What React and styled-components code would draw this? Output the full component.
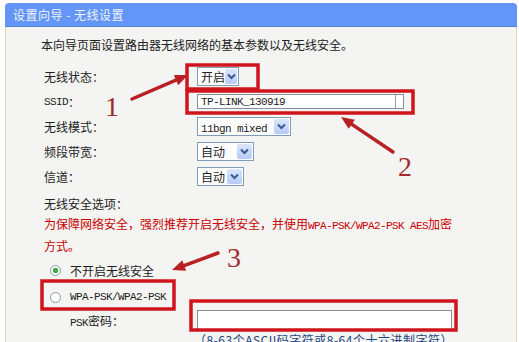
import React from "react";
import styled, { createGlobalStyle } from "styled-components";

const GlobalStyle = createGlobalStyle`
  html, body {
    margin: 0;
    padding: 0;
    background: #ffffff;
    width: 519px;
    height: 342px;
    overflow: hidden;
  }
  body {
    font-family: "Noto Sans CJK SC", "Noto Sans", sans-serif;
    font-size: 12px;
    color: #222;
  }
`;

export default function App() {
  return (
    <Page>
      <GlobalStyle />
      <Panel>
        <TitleBar>设置向导 - 无线设置</TitleBar>
        <PanelBody>
          <Intro>本向导页面设置路由器无线网络的基本参数以及无线安全。</Intro>

          <Form>
            <Label>无线状态：</Label>
            <Cell>
              <Select width={42}>开启</Select>
            </Cell>

            <Label>
              <Mono>SSID</Mono>：
            </Label>
            <Cell>
              <TextInput $width={207}>
                <Mono>TP-LINK_130919</Mono>
              </TextInput>
            </Cell>

            <Label>无线模式：</Label>
            <Cell>
              <Select width={94}>
                <Mono>11bgn mixed</Mono>
              </Select>
            </Cell>

            <Label>频段带宽：</Label>
            <Cell>
              <Select width={57}>自动</Select>
            </Cell>

            <Label>信道：</Label>
            <Cell>
              <Select width={47}>自动</Select>
            </Cell>
          </Form>

          <Section>
            <Line>无线安全选项：</Line>
            <Warning>
              <Line>
                为保障网络安全，强烈推荐开启无线安全，并使用
                <Mono>WPA-PSK/WPA2-PSK AES</Mono>加密
              </Line>
              <Line>方式。</Line>
            </Warning>
          </Section>

          <RadioRow>
            <Radio checked />
            <span>不开启无线安全</span>
          </RadioRow>
          <RadioRow $gap>
            <Radio />
            <Mono>WPA-PSK/WPA2-PSK</Mono>
          </RadioRow>

          <PskRow>
            <PskLabel>
              <Mono>PSK</Mono>密码：
            </PskLabel>
            <TextInput $width={255} $tall />
          </PskRow>
          <Hint>（8-63个ASCII码字符或8-64个十六进制字符）</Hint>
        </PanelBody>
      </Panel>

      <Annotations />
    </Page>
  );
}

function Select({ width, children }) {
  return (
    <SelectBox $width={width}>
      <span>{children}</span>
      <DropButton>
        <svg width="9" height="7" viewBox="0 0 9 7">
          <path d="M1 1.5 L4.5 5 L8 1.5" fill="none" stroke="#3c5a8e" strokeWidth="2" />
        </svg>
      </DropButton>
    </SelectBox>
  );
}

function Radio({ checked }) {
  return <RadioDot $checked={checked} />;
}

const boxes = [
  { x: 187, y: 65, w: 71, h: 24 },
  { x: 187, y: 91, w: 226, h: 22 },
  { x: 42, y: 281, w: 132, h: 28 },
  { x: 191, y: 301, w: 265, h: 29 },
];

const arrows = [
  { from: [132, 99], to: [188, 75] },
  { from: [393, 152], to: [341, 117] },
  { from: [218, 253], to: [172, 270] },
];

function arrowHead([x1, y1], [x2, y2]) {
  const dx = x2 - x1;
  const dy = y2 - y1;
  const len = Math.hypot(dx, dy);
  const ux = dx / len;
  const uy = dy / len;
  const bx = x2 - ux * 13;
  const by = y2 - uy * 13;
  const px = -uy * 5.5;
  const py = ux * 5.5;
  return `${x2},${y2} ${bx + px},${by + py} ${bx - px},${by - py}`;
}

function Annotations() {
  return (
    <Overlay>
      <svg width="519" height="342" viewBox="0 0 519 342">
        {boxes.map((b, i) => (
          <rect key={i} x={b.x} y={b.y} width={b.w} height={b.h} fill="none" stroke="#d0141c" strokeWidth="3.5" />
        ))}
        {arrows.map((a, i) => {
          const [x1, y1] = a.from;
          const [x2, y2] = a.to;
          const len = Math.hypot(x2 - x1, y2 - y1);
          const ex = x2 - ((x2 - x1) / len) * 10;
          const ey = y2 - ((y2 - y1) / len) * 10;
          return (
            <g key={i}>
              <line x1={x1} y1={y1} x2={ex} y2={ey} stroke="#b82024" strokeWidth="3.5" strokeLinecap="round" />
              <polygon points={arrowHead(a.from, a.to)} fill="#b82024" />
            </g>
          );
        })}
      </svg>
      <Number style={{ left: 105, top: 93 }}>1</Number>
      <Number style={{ left: 398, top: 153 }}>2</Number>
      <Number style={{ left: 227, top: 244 }}>3</Number>
    </Overlay>
  );
}

const Page = styled.div`
  position: relative;
  width: 519px;
  height: 342px;
  padding-top: 3px;
  box-sizing: border-box;
`;

const Panel = styled.div`
  margin-left: 5px;
  width: 512px;
`;

const TitleBar = styled.div`
  height: 24px;
  box-sizing: border-box;
  padding-left: 8px;
  display: flex;
  align-items: center;
  background: #6396f6;
  border-bottom: 1px solid #4f7fd6;
  border-radius: 4px 4px 0 0;
  color: #eef3ff;
  font-size: 12px;
  letter-spacing: 0.5px;
`;

const PanelBody = styled.div`
  background: #f4f4f3;
  border-left: 1px solid #f0d6bc;
  border-right: 1px solid #f0d6bc;
  padding: 8px 0 20px 35px;
  height: 320px;
  box-sizing: border-box;
`;

const Intro = styled.div`
  line-height: 20px;
`;

const Form = styled.div`
  display: grid;
  grid-template-columns: 153px 1fr;
  grid-auto-rows: 25px;
  margin: 9px 0 0 3px;
`;

const Label = styled.div`
  display: flex;
  align-items: center;
`;

const Cell = styled.div`
  display: flex;
  align-items: center;
`;

const Mono = styled.span`
  font-family: "Liberation Mono", "DejaVu Sans Mono", monospace;
  font-size: 11px;
  letter-spacing: -0.6px;
`;

const SelectBox = styled.div`
  width: ${({ $width }) => $width}px;
  height: 19px;
  box-sizing: border-box;
  border: 1px solid #7f9db9;
  background: #ffffff;
  display: flex;
  align-items: center;
  justify-content: space-between;
  padding-left: 3px;
  white-space: nowrap;
`;

const DropButton = styled.div`
  width: 15px;
  height: 15px;
  margin-right: 1px;
  border-radius: 2px;
  background: linear-gradient(#dbe6fe, #b6cbf7);
  display: flex;
  align-items: center;
  justify-content: center;
`;

const TextInput = styled.div`
  position: relative;
  width: ${({ $width }) => $width}px;
  height: ${({ $tall }) => ($tall ? 20 : 15)}px;
  box-sizing: border-box;
  border: 1px solid #8a8f99;
  background: #ffffff;
  display: flex;
  align-items: center;
  padding-left: 3px;

  &::after {
    content: "";
    display: ${({ $tall }) => ($tall ? "none" : "block")};
    position: absolute;
    right: 7px;
    top: 0;
    bottom: 0;
    width: 1px;
    background: #9a9a9a;
  }
`;

const Section = styled.div`
  margin: 5px 0 0 3px;
  line-height: 20px;
`;

const Line = styled.div`
  white-space: nowrap;
`;

const Warning = styled.div`
  color: #c80000;
`;

const RadioRow = styled.div`
  display: flex;
  align-items: center;
  gap: 9px;
  height: 24px;
  margin: ${({ $gap }) => ($gap ? "3px" : "2px")} 0 0 9px;
`;

const RadioDot = styled.span`
  width: 11px;
  height: 11px;
  box-sizing: border-box;
  border-radius: 50%;
  border: 1px solid #8a9aa8;
  background: ${({ $checked }) =>
    $checked
      ? "radial-gradient(circle, #3fae3f 0 2.5px, #ffffff 3px)"
      : "#ffffff"};
`;

const PskRow = styled.div`
  display: flex;
  align-items: center;
  height: 22px;
  margin: 0 0 0 29px;
`;

const PskLabel = styled.div`
  width: 127px;
`;

const Hint = styled.div`
  margin: 0 0 0 153px;
  line-height: 18px;
  color: #23457d;
  white-space: nowrap;
  letter-spacing: 0.5px;
`;

const Overlay = styled.div`
  position: absolute;
  inset: 0;
  pointer-events: none;

  svg {
    position: absolute;
    left: 0;
    top: 0;
  }
`;

const Number = styled.span`
  position: absolute;
  font-family: "Liberation Serif", serif;
  font-size: 28px;
  line-height: 28px;
  color: #a32a2a;
`;
